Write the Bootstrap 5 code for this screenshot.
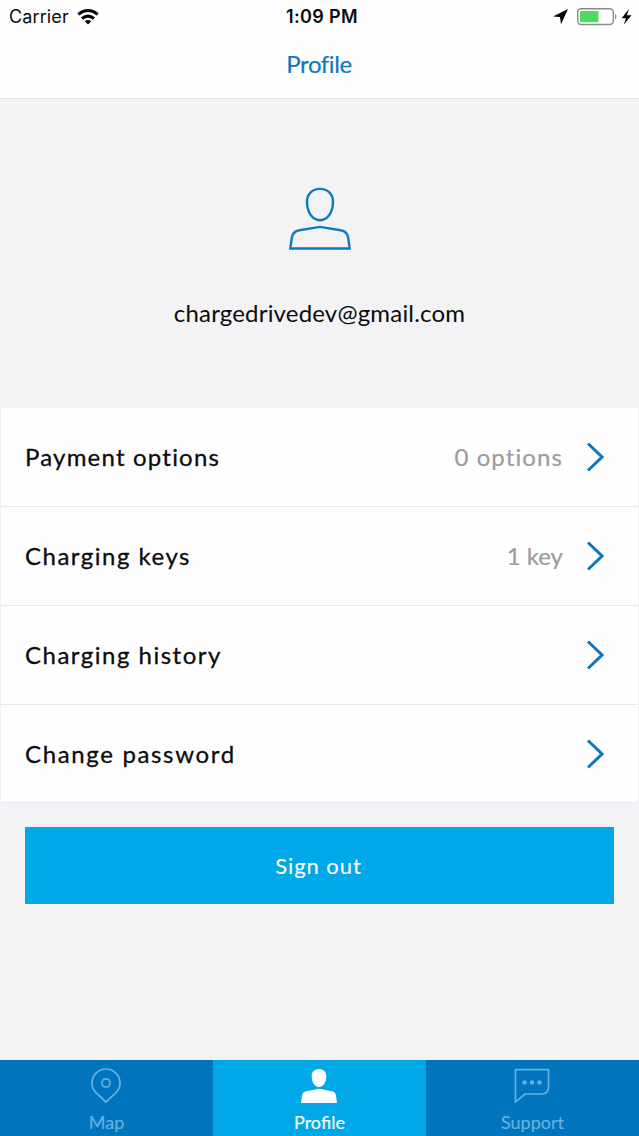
<!DOCTYPE html>
<html lang="en">
<head>
<meta charset="utf-8">
<meta name="viewport" content="width=device-width, initial-scale=1">
<title>Profile</title>
<link href="https://cdn.jsdelivr.net/npm/bootstrap@5.3.0/dist/css/bootstrap.min.css" rel="stylesheet">
<style>
  body { font-family: Lato, sans-serif; background: #f3f2f4; color: #0c0c0e; height: 1136px; overflow: hidden; }
  svg { display: block; flex: none; }
  .app-head { height: 99px; border-bottom: 1px solid #e4e3e6; background: #fefefe; }
  .status { height: 33px; font-family: Inter, "Liberation Sans", sans-serif; font-size: 18px; line-height: 33px; padding: 0 7px 0 9px; }
  .status > div { flex: 1 1 0; }
  .carrier { letter-spacing: .12px; }
  .clock { font-weight: 600; letter-spacing: .35px; padding-left: 3px; }
  .screen-title { font-size: 24px; line-height: 30px; color: #0e78bf; padding: 16px 1px 0 0; letter-spacing: -.4px; -webkit-text-stroke: .2px; }
  .account { height: 309px; padding: 88px 0 0; }
  .mail { font-size: 24px; line-height: 30px; margin-top: 47px; letter-spacing: .18px; }
  .menu-list { --bs-list-group-bg: #fefefe; --bs-list-group-color: #0c0c0e; --bs-list-group-border-color: #e9e8ee; height: 395px; }
  .menu-list .list-group-item { flex: 0 0 99px; padding: 0 34px 0 24px; font-size: 24px; line-height: 30px; letter-spacing: 1.1px; border-top: 0; border-left-color: #f1f0f5; border-right-color: #f1f0f5; }
  .menu-list .list-group-item:last-child { flex-basis: 98px; }
  .menu-name { -webkit-text-stroke: .3px; letter-spacing: 1.5px; }
  .menu-name.snug { letter-spacing: 1.2px; }
  .menu-name.airy { letter-spacing: 1.65px; }
  .menu-value { color: #9b9a9e; margin-right: 22px; -webkit-text-stroke: .2px; }
  .menu-value.snug { letter-spacing: 0; margin-right: 22px; }
  .sign-out { --bs-btn-bg: #00a8e8; --bs-btn-color: #fff; --bs-btn-border-width: 0; height: 77px; margin: 24px 25px 0 25px; padding: 0 2px 1px 0; font-size: 22px; letter-spacing: .95px; -webkit-text-stroke: .1px; }
  .tabs { height: 76px; background: #0075be; font-size: 18px; line-height: 22px; }
  .tabs .nav-link { color: #66b2de; padding: 8px 1px 0 0; -webkit-text-stroke: .15px; }
  .tabs .nav-link.active { color: #fff; background: #00a8e8; }
  .tab-text { margin: 7px 0 0 1px; }
</style>
</head>
<body class="d-flex flex-column">
<header class="app-head">
  <div class="status d-flex align-items-center">
    <div class="d-flex align-items-center">
      <span class="carrier">Carrier</span>
      <svg class="ms-2" width="22" height="16" viewBox="0 0 22 16" fill="none" stroke="#000" stroke-width="3"><path d="M1.300 5.400Q11-2.300 20.700 5.400M5 9.500Q11 4.700 17 9.500"/><path d="M7.800 12.200Q11 9.700 14.200 12.200L11 15.500Z" fill="#000" stroke="none"/></svg>
    </div>
    <span class="clock">1:09 PM</span>
    <div class="d-flex align-items-center justify-content-end">
      <svg width="79" height="20" viewBox="0 0 79 20"><path d="M0 9.400 15 2 8 17.300 7 10Z" fill="#000"/><rect x="24.700" y="1.700" width="35.600" height="15.800" rx="3.500" fill="none" stroke="#8b8a8e" stroke-width="1.400"/><rect x="27" y="4" width="18.500" height="11.300" rx="1" fill="#4cd964"/><path d="M62 6.800Q65 9.500 62 12.400Z" fill="#8b8a8e"/><path d="M76 1.700 68.700 11.200h4.300L70.700 17.800 78.500 8.300h-4.600Z" fill="#000"/></svg>
    </div>
  </div>
  <div class="screen-title text-center">Profile</div>
</header>

<main class="flex-grow-1">
  <section class="account d-flex flex-column align-items-center">
    <svg width="62" height="64" viewBox="0 -.7 62 64" fill="none" stroke="#107abf" stroke-width="2.400"><path d="M31 1.200C23 1.200 18 6.800 18 13.500c0 10 4.500 19 13 19s13-9 13-19C44 6.800 39 1.200 31 1.200Z"/><path d="M1.300 60.800 2.800 50c.7-4.600 3.200-6.700 7.500-7.500L31 39.200l20.700 3.300c4.300.8 6.800 2.900 7.500 7.500l1.500 10.800Z"/></svg>
    <div class="mail">chargedrivedev@gmail.com</div>
  </section>

  <div class="menu-list list-group rounded-0">
    <a href="#" class="list-group-item d-flex align-items-center"><span class="menu-name snug me-auto">Payment options</span><span class="menu-value">0 options</span><svg width="19" height="30" viewBox="0 0 19 30" fill="none" stroke="#0f77bd" stroke-width="3"><path d="M3 1.500 17 15 3 28.500"/></svg></a>
    <a href="#" class="list-group-item d-flex align-items-center"><span class="menu-name me-auto">Charging keys</span><span class="menu-value snug">1 key</span><svg width="19" height="30" viewBox="0 0 19 30" fill="none" stroke="#0f77bd" stroke-width="3"><path d="M3 1.500 17 15 3 28.500"/></svg></a>
    <a href="#" class="list-group-item d-flex align-items-center"><span class="menu-name me-auto">Charging history</span><svg width="19" height="30" viewBox="0 0 19 30" fill="none" stroke="#0f77bd" stroke-width="3"><path d="M3 1.500 17 15 3 28.500"/></svg></a>
    <a href="#" class="list-group-item d-flex align-items-center"><span class="menu-name airy me-auto">Change password</span><svg width="19" height="30" viewBox="0 0 19 30" fill="none" stroke="#0f77bd" stroke-width="3"><path d="M3 1.500 17 15 3 28.500"/></svg></a>
  </div>

  <div class="d-grid"><button type="button" class="sign-out btn rounded-0">Sign out</button></div>
</main>

<nav class="tabs nav nav-fill flex-nowrap">
  <a href="#" class="nav-link nav-item w-100 d-flex flex-column align-items-center"><svg width="36" height="36" viewBox="0 0 36 36" fill="none" stroke="currentColor" stroke-width="1.700"><path d="M18 34 8.200 25A14 14 0 1 1 27.800 25Z"/><circle cx="18" cy="15" r="4.100"/></svg><span class="tab-text">Map</span></a>
  <a href="#" class="nav-link nav-item active w-100 d-flex flex-column align-items-center"><svg width="36" height="36" viewBox="0 0 36 36" fill="currentColor"><path d="M18 1c-4.500 0-7.300 3-7.300 7 0 5.500 2.500 11 7.300 11s7.300-5.500 7.300-11c0-4-2.800-7-7.300-7ZM0 35l1-7.500c.5-2.600 1.900-3.800 4.300-4.300L18 20.800l12.700 2.400c2.400.5 3.800 1.700 4.300 4.300l1 7.500Z"/></svg><span class="tab-text">Profile</span></a>
  <a href="#" class="nav-link nav-item w-100 d-flex flex-column align-items-center"><svg width="36" height="36" viewBox="0 0 36 36" fill="none" stroke="currentColor" stroke-width="1.700"><path d="M1.500 1.700h33V19q0 7-7 7H11L1.500 34Z"/><g fill="currentColor" stroke="none"><circle cx="10.500" cy="14.500" r="2.200"/><circle cx="18" cy="14.500" r="2.200"/><circle cx="25.500" cy="14.500" r="2.200"/></g></svg><span class="tab-text">Support</span></a>
</nav>
<script src="https://cdn.jsdelivr.net/npm/bootstrap@5.3.0/dist/js/bootstrap.bundle.min.js"></script>
</body>
</html>
